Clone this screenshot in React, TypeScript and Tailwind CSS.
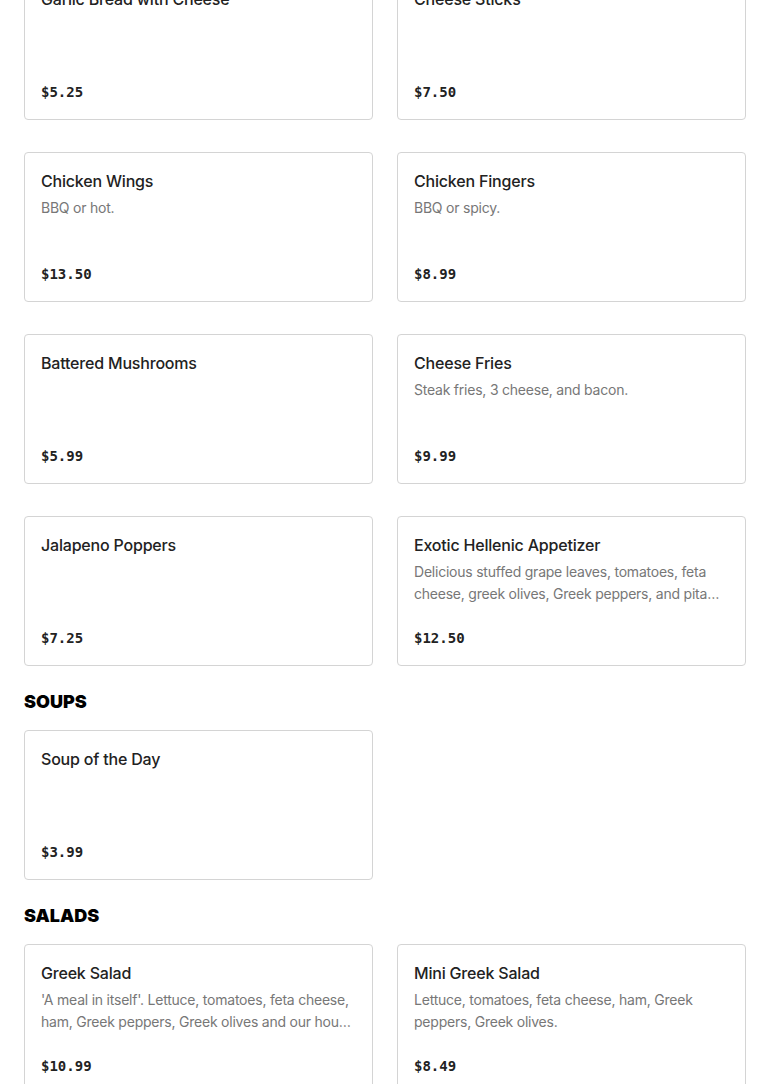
import React from "react";

type Item = { name: string; desc?: string; price: string };

const appetizers: Item[] = [
	{ name: "Garlic Bread with Cheese", price: "$5.25" },
	{ name: "Cheese Sticks", price: "$7.50" },
	{ name: "Chicken Wings", desc: "BBQ or hot.", price: "$13.50" },
	{ name: "Chicken Fingers", desc: "BBQ or spicy.", price: "$8.99" },
	{ name: "Battered Mushrooms", price: "$5.99" },
	{ name: "Cheese Fries", desc: "Steak fries, 3 cheese, and bacon.", price: "$9.99" },
	{ name: "Jalapeno Poppers", price: "$7.25" },
	{
		name: "Exotic Hellenic Appetizer",
		desc: "Delicious stuffed grape leaves, tomatoes, feta cheese, greek olives, Greek peppers, and pita bread with tzatziki sauce.",
		price: "$12.50",
	},
];

const soups: Item[] = [{ name: "Soup of the Day", price: "$3.99" }];

const salads: Item[] = [
	{
		name: "Greek Salad",
		desc: "'A meal in itself'. Lettuce, tomatoes, feta cheese, ham, Greek peppers, Greek olives and our house dressing.",
		price: "$10.99",
	},
	{
		name: "Mini Greek Salad",
		desc: "Lettuce, tomatoes, feta cheese, ham, Greek peppers, Greek olives.",
		price: "$8.49",
	},
];

const Card = ({ item }: { item: Item }) => (
	<div className="h-[150px] border border-[#d4d4d4] rounded-[4px] bg-white px-4 pt-4 pb-[17px] flex flex-col justify-between">
		<div>
			<h3 className="text-[16px] leading-6 font-medium tracking-[-0.012em] text-[#222]">{item.name}</h3>
			{item.desc && (
				<p className="mt-[4px] text-[14px] leading-[22px] tracking-[-0.016em] text-[#777] line-clamp-2">
					{item.desc}
				</p>
			)}
		</div>
		<div className="font-['DejaVu_Sans_Mono',monospace] font-semibold text-[14px] leading-5 text-[#222]">
			{item.price}
		</div>
	</div>
);

const Grid = ({ items }: { items: Item[] }) => (
	<div className="grid grid-cols-2 gap-x-6 gap-y-8">
		{items.map((item) => (
			<Card key={item.name} item={item} />
		))}
	</div>
);

const Heading = ({ title }: { title: string }) => (
	<h2 className="mt-[22px] mb-[14px] text-[18px] leading-7 font-black text-black uppercase">{title}</h2>
);

export default function App() {
	return (
		<div className="bg-white min-h-screen overflow-hidden font-['Inter','Liberation_Sans',sans-serif]">
			<div className="px-6 -mt-[30px]">
				<Grid items={appetizers} />
				<Heading title="Soups" />
				<Grid items={soups} />
				<Heading title="Salads" />
				<Grid items={salads} />
			</div>
		</div>
	);
}
